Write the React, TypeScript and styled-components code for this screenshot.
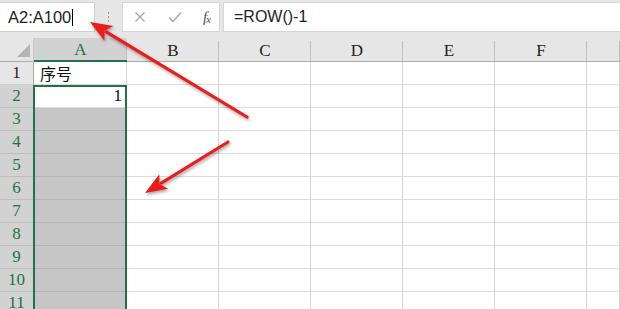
import React from "react";
import styled, { createGlobalStyle, css } from "styled-components";

const GREEN = "#217346";

const GlobalStyle = createGlobalStyle`
  html, body { margin: 0; padding: 0; background: #ffffff; overflow: hidden; }
  #root { width: 620px; height: 309px; }
`;

const Page = styled.div`
  position: relative;
  width: 620px;
  height: 309px;
  overflow: hidden;
  background: #ffffff;
  display: flex;
  flex-direction: column;
`;

const Toolbar = styled.div`
  height: 38px;
  flex: none;
  background: #e6e6e6;
  display: flex;
  align-items: flex-start;
  padding-top: 2px;
  box-sizing: border-box;
`;

const NameBox = styled.div`
  width: 95px;
  height: 30px;
  background: #ffffff;
  border: 1px solid #d0d0d0;
  border-left: none;
  box-sizing: border-box;
  display: flex;
  align-items: center;
  padding-left: 8px;
  font-family: "Liberation Sans", Arial, sans-serif;
  font-size: 16.5px;
  color: #222;
`;

const Caret = styled.span`
  display: inline-block;
  width: 1px;
  height: 17px;
  background: #000;
  margin-left: 1px;
`;

const Grip = styled.div`
  width: 27px;
  height: 30px;
  display: flex;
  flex-direction: column;
  align-items: center;
  justify-content: center;
  gap: 2px;
`;

const GripDot = styled.span`
  width: 1.5px;
  height: 2px;
  background: #9a9a9a;
`;

const FxButtons = styled.div`
  width: 98px;
  height: 30px;
  background: #ffffff;
  border: 1px solid #d6d6d6;
  box-sizing: border-box;
  display: flex;
  align-items: center;
  justify-content: space-between;
  padding: 0 6px 0 10px;
`;

const IconSlot = styled.span`
  width: 14px;
  height: 14px;
  display: flex;
  align-items: center;
  justify-content: center;
`;

const FxLabel = styled.span`
  font-family: "Liberation Serif", "Times New Roman", serif;
  font-style: italic;
  font-size: 15px;
  color: #555;
  letter-spacing: -1px;
  margin-right: 3px;
  & > sub {
    font-size: 11px;
    vertical-align: -1px;
  }
`;

const FormulaInput = styled.div`
  flex: 1;
  height: 30px;
  margin-left: 3px;
  background: #ffffff;
  border: 1px solid #d6d6d6;
  border-right: none;
  box-sizing: border-box;
  display: flex;
  align-items: center;
  padding-left: 10px;
  font-family: "Liberation Sans", Arial, sans-serif;
  font-size: 16px;
  color: #222;
`;

const Sheet = styled.div`
  flex: 1;
  display: grid;
  grid-template-columns: 34px 93px 92px 92px 92px 92px 92px 1fr;
  grid-template-rows: 24px repeat(12, 23px);
  background: #ffffff;
`;

const Corner = styled.div`
  grid-column: 1;
  grid-row: 1;
  background: #e6e6e6;
  border-right: 1px solid #c8c8c8;
  border-bottom: 1px solid #ababab;
  box-sizing: border-box;
  display: flex;
  align-items: flex-end;
  justify-content: flex-end;
  padding: 0 3px 4px 0;
`;

const ColHeader = styled.div<{ $active?: boolean }>`
  background: ${(p) => (p.$active ? "#d2d2d2" : "#e6e6e6")};
  box-sizing: border-box;
  border-bottom: ${(p) => (p.$active ? `2px solid ${GREEN}` : "1px solid #ababab")};
  display: flex;
  align-items: center;
  justify-content: center;
  font-family: "Liberation Serif", "Times New Roman", serif;
  font-size: 17px;
  color: ${(p) => (p.$active ? GREEN : "#222")};
  position: relative;
  padding-top: 2px;
  &::after {
    content: "";
    position: absolute;
    right: 0;
    top: 3px;
    bottom: 0;
    width: 1px;
    background: #c0c0c0;
  }
`;

const RowHeader = styled.div<{ $active?: boolean }>`
  grid-column: 1;
  background: ${(p) => (p.$active ? "#d2d2d2" : "#e6e6e6")};
  box-sizing: border-box;
  border-right: 1px solid #ababab;
  border-bottom: 1px solid ${(p) => (p.$active ? "#bdbdbd" : "#cfcfcf")};
  display: flex;
  align-items: center;
  justify-content: center;
  font-family: "Liberation Serif", "Times New Roman", serif;
  font-size: 17px;
  color: ${(p) => (p.$active ? GREEN : "#222")};
`;

const Cell = styled.div<{ $fill?: "sel" | "none"; $align?: "left" | "right" }>`
  box-sizing: border-box;
  border-right: 1px solid #d4d4d4;
  border-bottom: 1px solid #dcdcdc;
  display: flex;
  align-items: center;
  justify-content: ${(p) => (p.$align === "right" ? "flex-end" : "flex-start")};
  padding: 0 4px 0 6px;
  color: #111;
  ${(p) =>
    p.$fill === "sel" &&
    css`
      background: #c6c6c6;
      border-bottom-color: #b4b4b4;
      border-right-color: #b4b4b4;
    `}
`;

const CjkText = styled.span`
  font-family: "Noto Sans CJK SC", "Noto Sans", sans-serif;
  font-size: 16px;
  line-height: 1;
`;

const NumText = styled.span`
  font-family: "Liberation Serif", "Times New Roman", serif;
  font-size: 17px;
`;

const Selection = styled.div`
  grid-column: 2;
  grid-row: 3 / span 11;
  border: 2px solid ${GREEN};
  margin-left: -1px;
  box-sizing: border-box;
  pointer-events: none;
  z-index: 2;
`;

const Overlay = styled.svg`
  position: absolute;
  left: 0;
  top: 0;
  width: 620px;
  height: 309px;
  pointer-events: none;
  z-index: 5;
  filter: drop-shadow(1px 2px 1.5px rgba(0, 0, 0, 0.35));
`;

const columns = ["A", "B", "C", "D", "E", "F", ""];

function Arrow({ x1, y1, x2, y2 }: { x1: number; y1: number; x2: number; y2: number }) {
  const dx = x2 - x1;
  const dy = y2 - y1;
  const len = Math.hypot(dx, dy);
  const ux = dx / len;
  const uy = dy / len;
  const hl = 22;
  const hw = 8.5;
  const bx = x2 - ux * hl;
  const by = y2 - uy * hl;
  const px = -uy * hw;
  const py = ux * hw;
  return (
    <g>
      <line x1={x1} y1={y1} x2={bx + ux * 3} y2={by + uy * 3} stroke="#ee1b1b" strokeWidth={3.2} strokeLinecap="round" />
      <polygon
        points={`${x2},${y2} ${bx + px},${by + py} ${bx + ux * 5},${by + uy * 5} ${bx - px},${by - py}`}
        fill="#ee1b1b"
      />
    </g>
  );
}

export default function App() {
  const rows = Array.from({ length: 12 }, (_, i) => i + 1);
  return (
    <>
      <GlobalStyle />
      <Page>
        <Toolbar>
          <NameBox>
            A2:A100
            <Caret />
          </NameBox>
          <Grip>
            <GripDot />
            <GripDot />
            <GripDot />
          </Grip>
          <FxButtons>
            <IconSlot>
              <svg width="12" height="12" viewBox="0 0 12 12">
                <path d="M1.5 1.5 L10.5 10.5 M10.5 1.5 L1.5 10.5" stroke="#a6a6a6" strokeWidth="1.3" />
              </svg>
            </IconSlot>
            <IconSlot>
              <svg width="14" height="12" viewBox="0 0 14 12">
                <path d="M1 6.5 L5 10.5 L13 1.5" stroke="#a6a6a6" strokeWidth="1.4" fill="none" />
              </svg>
            </IconSlot>
            <FxLabel>
              f<sub>x</sub>
            </FxLabel>
          </FxButtons>
          <FormulaInput>=ROW()-1</FormulaInput>
        </Toolbar>
        <Sheet>
          <Corner>
            <svg width="13" height="13" viewBox="0 0 13 13">
              <polygon points="13,0 13,13 0,13" fill="#b5b5b5" />
            </svg>
          </Corner>
          {columns.map((c, i) => (
            <ColHeader key={c + i} $active={c === "A"} style={{ gridColumn: i + 2, gridRow: 1 }}>
              {c}
            </ColHeader>
          ))}
          {rows.map((r) => (
            <React.Fragment key={r}>
              <RowHeader $active={r >= 2} style={{ gridRow: r + 1 }}>
                {r}
              </RowHeader>
              {columns.map((c, i) => {
                const isA = i === 0;
                const fill = isA && r >= 3 ? "sel" : "none";
                return (
                  <Cell
                    key={c + i}
                    $fill={fill}
                    $align={isA && r === 2 ? "right" : "left"}
                    style={{ gridColumn: i + 2, gridRow: r + 1 }}
                  >
                    {isA && r === 1 && <CjkText>序号</CjkText>}
                    {isA && r === 2 && <NumText>1</NumText>}
                  </Cell>
                );
              })}
            </React.Fragment>
          ))}
          <Selection />
        </Sheet>
        <Overlay viewBox="0 0 620 309">
          <Arrow x1={247} y1={117} x2={90} y2={22} />
          <Arrow x1={228} y1={142} x2={145} y2={193} />
        </Overlay>
      </Page>
    </>
  );
}
